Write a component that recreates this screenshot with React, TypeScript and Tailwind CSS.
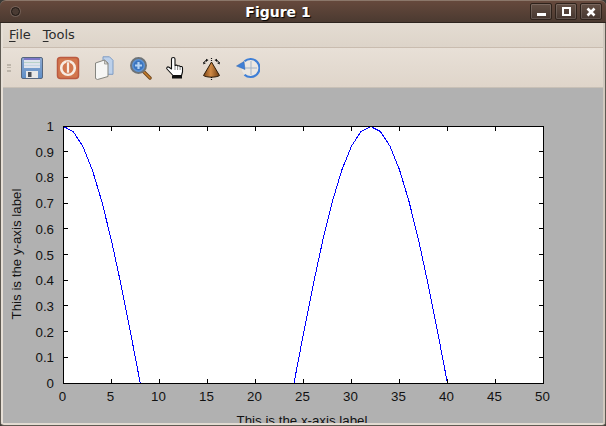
import React from "react";

const xTicks = [0, 5, 10, 15, 20, 25, 30, 35, 40, 45, 50];
const yTicks = [0, 0.1, 0.2, 0.3, 0.4, 0.5, 0.6, 0.7, 0.8, 0.9, 1];

const X0 = 63;
const X1 = 543;
const Y0 = 383;
const Y1 = 126;
const FONT = "'Liberation Sans', sans-serif";

const px = (x: number) => X0 + ((X1 - X0) * x) / 50;
const py = (y: number) => Y0 - (Y0 - Y1) * y;

function curvePoints() {
  const pts: string[] = [];
  for (let x = 0; x <= 50; x++) {
    const v = Math.max(0, Math.cos((x * Math.PI) / 16));
    pts.push(`${px(x) + 0.5},${py(v) + 0.5}`);
  }
  return pts.join(" ");
}

function SaveIcon() {
  return (
    <svg width="24" height="24" viewBox="0 0 24 24">
      <defs>
        <linearGradient id="disk" x1="0" y1="0" x2="0" y2="1">
          <stop offset="0" stopColor="#8fa9cf" />
          <stop offset="1" stopColor="#5f8fc8" />
        </linearGradient>
      </defs>
      <rect x="1.500" y="1.500" width="21" height="21" rx="1.500" fill="url(#disk)" stroke="#56667e" />
      <rect x="4" y="2" width="16" height="10" fill="#dfe3ec" />
      <rect x="4" y="2" width="16" height="2" fill="#7d78c8" />
      <rect x="4" y="6" width="16" height="1" fill="#b9d3c9" />
      <rect x="4" y="9" width="16" height="1" fill="#c5d6e4" />
      <rect x="6" y="15" width="12" height="7" fill="#e8e8e8" />
      <rect x="8" y="16" width="3.500" height="5" fill="#4b4f57" />
    </svg>
  );
}

function StopIcon() {
  return (
    <svg width="24" height="24" viewBox="0 0 24 24">
      <rect x="1.500" y="1.500" width="21" height="21" rx="3" fill="#d2774e" stroke="#bb5a40" strokeWidth="1.500" />
      <circle cx="12" cy="12" r="6.800" fill="none" stroke="#f7ece2" strokeWidth="2.600" />
      <rect x="10.700" y="6" width="2.600" height="11" fill="#f7ece2" stroke="#d2774e" strokeWidth="0.600" />
    </svg>
  );
}

function CopyIcon() {
  return (
    <svg width="24" height="24" viewBox="0 0 24 24">
      <path d="M11 0.800h6.500l3.500 3.500v14h-10z" fill="#bcd0ea" stroke="#7f9cc4" />
      <path d="M3.500 7l9-3 3.500 3v13.500l-10.500 3-2-1z" fill="#f6f6f4" stroke="#85857f" />
      <path d="M12.500 4v4h3.500z" fill="#d6d6d2" stroke="#85857f" strokeWidth="0.700" />
    </svg>
  );
}

function ZoomIcon() {
  return (
    <svg width="24" height="24" viewBox="0 0 24 24">
      <path d="M15 15l7 7" stroke="#6e4318" strokeWidth="3.400" strokeLinecap="round" />
      <path d="M15 15l7 7" stroke="#c77f2e" strokeWidth="1.600" strokeLinecap="round" />
      <circle cx="10.500" cy="9.500" r="7.500" fill="#5c93d6" stroke="#6f7478" strokeWidth="2" />
      <circle cx="10.500" cy="9.500" r="5" fill="#3a74bf" />
      <path d="M10.500 6v7M7 9.500h7" stroke="#b4d2f2" strokeWidth="2.200" />
    </svg>
  );
}

function HandIcon() {
  return (
    <svg width="24" height="24" viewBox="0 0 24 24">
      <path
        d="M7.500 3c0-2 3.500-2 3.500 0v6.500c1-.7 2.300-.5 2.600.5 1-.6 2.300-.3 2.500.6 1-.4 2.400 0 2.400 1.200v4.200l-1 3.500h-8.500l-6-6.500c-1-1.200.5-2.800 2-1.800l2.500 1.800z"
        fill="#fff"
        stroke="#111"
        strokeWidth="1.100"
        strokeLinejoin="round"
      />
      <rect x="8" y="19.500" width="10" height="3" fill="#111" />
      <path d="M11 10v4M13.600 10.500v3.500M16.100 11v3" stroke="#555" strokeWidth="0.700" />
    </svg>
  );
}

function RotateIcon() {
  return (
    <svg width="24" height="24" viewBox="0 0 24 24">
      <defs>
        <linearGradient id="cone" x1="0" y1="0" x2="1" y2="0">
          <stop offset="0" stopColor="#7d4414" />
          <stop offset="0.45" stopColor="#d08a45" />
          <stop offset="1" stopColor="#6e3c10" />
        </linearGradient>
      </defs>
      <path d="M11.500 6l8 13.500c-3 2.200-13 2.200-16 0z" fill="url(#cone)" stroke="#2b1a08" strokeWidth="1" />
      <path d="M11.500 2v3M11.500 21v3" stroke="#111" strokeWidth="1.200" strokeDasharray="1 1" />
      <path d="M4 6.500c.5-1 1.200-1.800 2.500-2.300M19 6.500c-.5-1-1.200-1.800-2.500-2.300" stroke="#111" strokeWidth="1" fill="none" />
      <path d="M3 6l3 1-2.500 1.500zM6 2.800l2.500 1.200-2.500 2zM20 6l-3 1 2.500 1.500zM17 2.800l-2.500 1.200 2.500 2z" fill="#111" />
    </svg>
  );
}

function HomeIcon() {
  return (
    <svg width="24" height="24" viewBox="0 0 24 24">
      <circle cx="14.500" cy="12" r="9" fill="#f3f3f1" fillOpacity="0.500" />
      <path d="M8.500 5.300a9 9 0 1 1 0 13.400" fill="none" stroke="#3f7fd6" strokeWidth="2.200" />
      <path d="M0.500 10l7.500-4.500 1 8z" fill="#3f7fd6" stroke="#2d62ad" strokeWidth="0.500" />
      <path d="M15 5v14M9 12h12" stroke="#a3b3c6" strokeWidth="1" />
    </svg>
  );
}

const icons = [SaveIcon, StopIcon, CopyIcon, ZoomIcon, HandIcon, RotateIcon, HomeIcon];

function Plot() {
  return (
    <svg width="606" height="426" viewBox="0 0 606 426" className="block shrink-0 -mt-[88px] -ml-[3px]">
      <rect x={X0} y={Y1} width={X1 - X0} height={Y0 - Y1} fill="#fff" />
      <polyline points={curvePoints()} fill="none" stroke="#0000ff" strokeWidth="1" shapeRendering="crispEdges" />
      <rect
        x={X0 + 0.5}
        y={Y1 + 0.5}
        width={X1 - X0}
        height={Y0 - Y1}
        fill="none"
        stroke="#000"
        strokeWidth="1"
        shapeRendering="crispEdges"
      />
      {xTicks.map((t) => (
        <g key={t}>
          <path
            d={`M${Math.floor(px(t)) + 0.5} ${Y0}v-4M${Math.floor(px(t)) + 0.5} ${Y1 + 1}v4`}
            stroke="#000"
            shapeRendering="crispEdges"
          />
          <text x={px(t) - 0.5} y={401} textAnchor="middle" fontSize="13.300" fill="#111" fontFamily={FONT}>
            {t}
          </text>
        </g>
      ))}
      {yTicks.map((t) => (
        <g key={t}>
          <path
            d={`M${X0 + 1} ${Math.floor(py(t)) + 0.5}h4M${X1} ${Math.floor(py(t)) + 0.5}h-4`}
            stroke="#000"
            shapeRendering="crispEdges"
          />
          <text x={54} y={py(t) + 5} textAnchor="end" fontSize="13.300" fill="#111" fontFamily={FONT}>
            {t}
          </text>
        </g>
      ))}
      <text x={302} y={425} textAnchor="middle" fontSize="13.300" fill="#111" fontFamily={FONT}>
        This is the x-axis label
      </text>
      <text
        x={0}
        y={0}
        transform="translate(21 254) rotate(-90)"
        textAnchor="middle"
        fontSize="13.300"
        fill="#111"
        fontFamily={FONT}
      >
        This is the y-axis label
      </text>
    </svg>
  );
}

function WinButton({ children }: { children: React.ReactNode }) {
  return (
    <div className="w-[22px] h-[17px] rounded-[2px] border border-[#2e221b] bg-gradient-to-b from-[#645045] to-[#463730] shadow-[inset_0_0_0_1px_rgba(255,255,255,0.14)] flex items-center justify-center">
      {children}
    </div>
  );
}

export default function App() {
  return (
    <div className="w-[606px] h-[426px] overflow-hidden flex flex-col bg-[#3c3b37] font-['DejaVu_Sans',sans-serif]">
      {/* title bar */}
      <div className="h-[23px] shrink-0 rounded-t-[6px] border-t border-t-[#8b776a] border-b border-b-[#2d241e] bg-gradient-to-b from-[#66493c] to-[#4b3a31] flex items-center pl-[11px] pr-[4px]">
        <div className="w-[9px] h-[9px] rounded-full border border-[#1f1814] bg-[#4a3b33] shadow-[0_0_0_1px_rgba(255,255,255,0.15)]" />
        <div className="flex-1 text-center text-white font-bold text-[14px] leading-none pl-[6px] [text-shadow:1px_1px_1px_#000]">
          Figure 1
        </div>
        <div className="flex gap-[3px]">
          <WinButton>
            <div className="w-[9px] h-[3px] bg-white mt-[5px]" />
          </WinButton>
          <WinButton>
            <div className="w-[9px] h-[9px] border-2 border-white" />
          </WinButton>
          <WinButton>
            <svg width="10" height="10" viewBox="0 0 10 10">
              <path d="M1.500 1.500l7 7M8.500 1.500l-7 7" stroke="#fff" strokeWidth="2.600" />
            </svg>
          </WinButton>
        </div>
      </div>

      <div className="flex-1 min-h-0 flex flex-col border-x border-b border-[#5f5a52] rounded-b-[4px] overflow-hidden">
        <div className="flex-1 min-h-0 flex flex-col border-x-2 border-b-2 border-l-[#e6dfd6] border-r-[#d0c8be] border-b-[#e3dbd2] overflow-hidden">
          {/* menu bar */}
          <div className="h-[25px] shrink-0 bg-gradient-to-b from-[#e4dcd2] to-[#ddd4c9] border-b border-[#c9bcaf] flex items-center gap-[12px] pl-[6px] text-[13px] text-[#2c2c2c]">
            <span>
              <span className="underline underline-offset-2">F</span>ile
            </span>
            <span>
              <span className="underline underline-offset-2">T</span>ools
            </span>
          </div>

          {/* toolbar */}
          <div className="h-[40px] shrink-0 bg-gradient-to-b from-[#e8e0d7] to-[#dfd5ca] border-b border-[#c8c0b6] flex items-center pl-[4px]">
            <div className="w-[4px] h-[8px] shrink-0 mr-[3px] border-y-2 border-[#bdb5aa] flex items-center">
              <div className="w-full h-px bg-[#bdb5aa]" />
            </div>
            {icons.map((Icon, i) => (
              <div key={i} className="w-[36px] flex items-center justify-center">
                <Icon />
              </div>
            ))}
          </div>

          {/* canvas */}
          <div className="flex-1 min-h-0 bg-[#b1b1b1] overflow-hidden">
            <Plot />
          </div>
        </div>
      </div>
    </div>
  );
}
